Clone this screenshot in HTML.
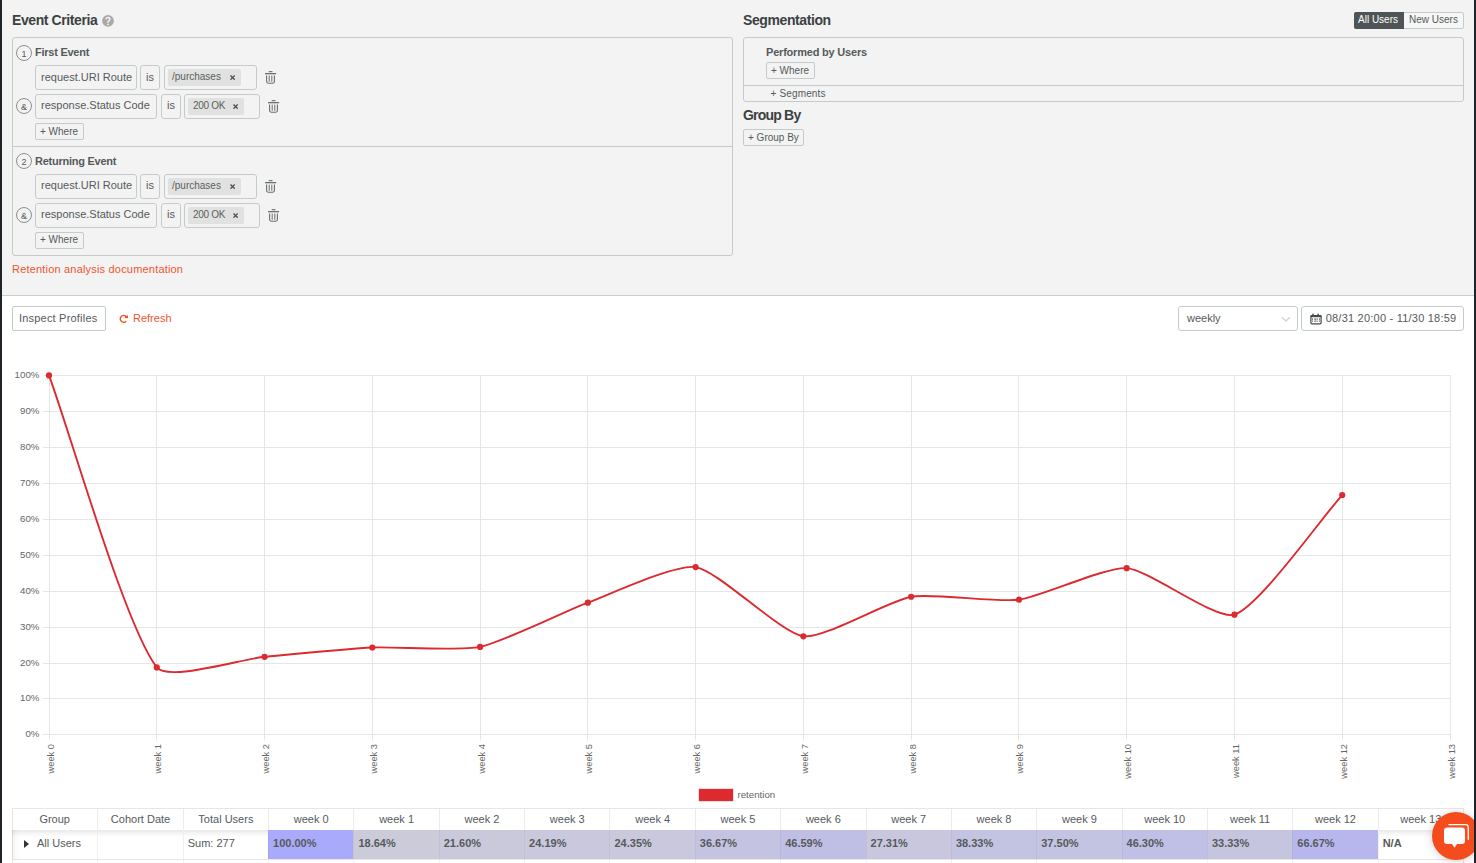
<!DOCTYPE html><html><head><meta charset='utf-8'><style>
*{box-sizing:border-box;margin:0;padding:0}
html,body{width:1476px;height:863px;overflow:hidden;background:#fff;font-family:"Liberation Sans", sans-serif;color:#555a5b}
.a{position:absolute;white-space:nowrap}
.top{position:absolute;left:0;top:0;width:1476px;height:296px;background:#f3f3f3;border-bottom:1px solid #c9cece}
.bl{position:absolute;left:0;top:0;width:2px;height:863px;background:#1d2327;z-index:50}
.br{position:absolute;left:1474px;top:0;width:2px;height:863px;background:#1d2327;z-index:50}
.h{font-size:14px;font-weight:700;color:#3c4142;line-height:14px;letter-spacing:-0.4px}
.box{position:absolute;border:1px solid #c5cbcb;border-radius:3px}
.inp{position:absolute;border:1px solid #c5cbcb;border-radius:3px;height:25px;font-size:11px;line-height:23px;padding-left:5px;color:#555a5b}
.btn{position:absolute;border:1px solid #c5cbcb;border-radius:2px;height:17px;font-size:10px;line-height:15px;padding-left:4px;color:#555a5b;background:#f3f3f3}
.tag{position:absolute;background:#e1e1e1;border-radius:2px;height:17px;font-size:10px;line-height:15px;padding-left:4px;color:#5a5f60}
.circ{position:absolute;width:16px;height:16px;border:1px solid #8a9090;border-radius:50%;font-size:9px;line-height:17px;text-align:center;color:#555a5b}
.sub{font-size:11px;font-weight:700;color:#555a5b;line-height:11px;letter-spacing:-0.25px}
.x{position:absolute;font-size:10px;font-weight:700;color:#444}
</style></head><body>
<div class='top'></div><div class='bl'></div><div class='br'></div>
<div class='a h' style='left:12px;top:13px'>Event Criteria</div>
<svg class='a' style='left:102px;top:15px' width='12' height='12' viewBox='0 0 12 12'><circle cx='6' cy='5.9' r='5.9' fill='#a9a9a9'/><path d='M3.9,4.3 Q4.1,2.4 6,2.4 Q7.9,2.4 7.9,4.1 Q7.9,5.2 6.7,6 Q5.9,6.5 5.9,7.7' fill='none' stroke='#f3f3f3' stroke-width='1.5'/><circle cx='5.85' cy='9.45' r='0.9' fill='#f3f3f3'/></svg>
<div class='box' style='left:12px;top:37px;width:721px;height:219px'></div>
<div class='a' style='left:12px;top:146px;width:721px;height:1px;background:#c5cbcb'></div>
<div class='circ' style='left:16px;top:45px'>1</div>
<div class='a sub' style='left:35px;top:47.3px'>First Event</div>
<div class='inp' style='left:35px;top:65px;width:102px;line-height:23px'>request.URI Route</div>
<div class='inp' style='left:140px;top:65px;width:20px;padding-left:5px;line-height:23px'>is</div>
<div class='inp' style='left:164px;top:65px;width:93px'></div>
<div class='tag' style='left:168px;top:69px;width:73px;letter-spacing:0px'>/purchases</div>
<svg class='a' style='left:230px;top:75.2px' width='5.2' height='5.2' viewBox='0 0 5.2 5.2'><path d='M0.5,0.5 L4.7,4.7 M4.7,0.5 L0.5,4.7' stroke='#4a4e4f' stroke-width='1.3'/></svg>
<svg class='a' style='left:264px;top:65px' width='14' height='20' viewBox='0 0 14 20'>
<rect x='4.7' y='6.1' width='3.8' height='1.1' fill='#6a6e6e'/>
<rect x='1' y='8.0' width='11.1' height='1.3' fill='#6a6e6e'/>
<path d='M2.6,10.6 V16.6 Q2.6,18.2 4.2,18.2 H8.8 Q10.4,18.2 10.4,16.6 V10.6' fill='none' stroke='#6a6e6e' stroke-width='1.1'/>
<path d='M5.2,10.6 V16.8 M7.8,10.6 V16.8' stroke='#6a6e6e' stroke-width='1.0'/>
</svg>
<div class='circ' style='left:16px;top:98px'>&amp;</div>
<div class='inp' style='left:35px;top:94px;width:122px;line-height:21px'>response.Status Code</div>
<div class='inp' style='left:161px;top:94px;width:20px;line-height:21px'>is</div>
<div class='inp' style='left:184px;top:94px;width:76px'></div>
<div class='tag' style='left:188px;top:98px;width:56px;padding-left:5px;letter-spacing:-0.3px'>200 OK</div>
<svg class='a' style='left:232.8px;top:103.6px' width='5.2' height='5.2' viewBox='0 0 5.2 5.2'><path d='M0.5,0.5 L4.7,4.7 M4.7,0.5 L0.5,4.7' stroke='#4a4e4f' stroke-width='1.3'/></svg>
<svg class='a' style='left:267px;top:94px' width='14' height='20' viewBox='0 0 14 20'>
<rect x='4.7' y='6.1' width='3.8' height='1.1' fill='#6a6e6e'/>
<rect x='1' y='8.0' width='11.1' height='1.3' fill='#6a6e6e'/>
<path d='M2.6,10.6 V16.6 Q2.6,18.2 4.2,18.2 H8.8 Q10.4,18.2 10.4,16.6 V10.6' fill='none' stroke='#6a6e6e' stroke-width='1.1'/>
<path d='M5.2,10.6 V16.8 M7.8,10.6 V16.8' stroke='#6a6e6e' stroke-width='1.0'/>
</svg>
<div class='btn' style='left:35px;top:123px;width:49px;line-height:15px'>+ Where</div>
<div class='circ' style='left:16px;top:153px'>2</div>
<div class='a sub' style='left:35px;top:156px'>Returning Event</div>
<div class='inp' style='left:35px;top:174px;width:102px;line-height:21px'>request.URI Route</div>
<div class='inp' style='left:140px;top:174px;width:20px;padding-left:5px;line-height:21px'>is</div>
<div class='inp' style='left:164px;top:174px;width:93px'></div>
<div class='tag' style='left:168px;top:178px;width:73px;letter-spacing:0px'>/purchases</div>
<svg class='a' style='left:230px;top:184.2px' width='5.2' height='5.2' viewBox='0 0 5.2 5.2'><path d='M0.5,0.5 L4.7,4.7 M4.7,0.5 L0.5,4.7' stroke='#4a4e4f' stroke-width='1.3'/></svg>
<svg class='a' style='left:264px;top:174px' width='14' height='20' viewBox='0 0 14 20'>
<rect x='4.7' y='6.1' width='3.8' height='1.1' fill='#6a6e6e'/>
<rect x='1' y='8.0' width='11.1' height='1.3' fill='#6a6e6e'/>
<path d='M2.6,10.6 V16.6 Q2.6,18.2 4.2,18.2 H8.8 Q10.4,18.2 10.4,16.6 V10.6' fill='none' stroke='#6a6e6e' stroke-width='1.1'/>
<path d='M5.2,10.6 V16.8 M7.8,10.6 V16.8' stroke='#6a6e6e' stroke-width='1.0'/>
</svg>
<div class='circ' style='left:16px;top:207px'>&amp;</div>
<div class='inp' style='left:35px;top:203px;width:122px;line-height:21px'>response.Status Code</div>
<div class='inp' style='left:161px;top:203px;width:20px;line-height:21px'>is</div>
<div class='inp' style='left:184px;top:203px;width:76px'></div>
<div class='tag' style='left:188px;top:207px;width:56px;padding-left:5px;letter-spacing:-0.3px'>200 OK</div>
<svg class='a' style='left:232.8px;top:212.6px' width='5.2' height='5.2' viewBox='0 0 5.2 5.2'><path d='M0.5,0.5 L4.7,4.7 M4.7,0.5 L0.5,4.7' stroke='#4a4e4f' stroke-width='1.3'/></svg>
<svg class='a' style='left:267px;top:203px' width='14' height='20' viewBox='0 0 14 20'>
<rect x='4.7' y='6.1' width='3.8' height='1.1' fill='#6a6e6e'/>
<rect x='1' y='8.0' width='11.1' height='1.3' fill='#6a6e6e'/>
<path d='M2.6,10.6 V16.6 Q2.6,18.2 4.2,18.2 H8.8 Q10.4,18.2 10.4,16.6 V10.6' fill='none' stroke='#6a6e6e' stroke-width='1.1'/>
<path d='M5.2,10.6 V16.8 M7.8,10.6 V16.8' stroke='#6a6e6e' stroke-width='1.0'/>
</svg>
<div class='btn' style='left:35px;top:232px;width:49px;line-height:13px'>+ Where</div>
<div class='a' style='left:12px;top:264px;font-size:11px;line-height:11px;letter-spacing:0.19px;color:#f0552f'>Retention analysis documentation</div>
<div class='a h' style='left:743px;top:13px'>Segmentation</div>
<div class='box' style='left:743px;top:37px;width:721px;height:65px'></div>
<div class='a' style='left:743px;top:85px;width:721px;height:1px;background:#c5cbcb'></div>
<div class='a sub' style='left:766px;top:47px;letter-spacing:-0.2px'>Performed by Users</div>
<div class='btn' style='left:766px;top:62px;width:49px'>+ Where</div>
<div class='a' style='left:770.5px;top:88px;font-size:10px;line-height:12px;letter-spacing:0.15px;color:#555a5b'>+ Segments</div>
<div class='a h' style='left:743px;top:108px;letter-spacing:-0.8px'>Group By</div>
<div class='btn' style='left:743px;top:129px;width:61px'>+ Group By</div>
<div class='a' style='left:1354px;top:12px;width:110px;height:17px;border:1px solid #c5cbcb;border-radius:2px;background:#f6f6f6'></div>
<div class='a' style='left:1354px;top:12px;width:50px;height:17px;background:#4f5556;border-radius:2px 0 0 2px;color:#fff;font-size:10px;line-height:16px;padding-left:4px'>All Users</div>
<div class='a' style='left:1409px;top:12px;font-size:10px;line-height:16px;color:#555a5b'>New Users</div>
<div class='a' style='left:12px;top:306px;width:94px;height:25px;border:1px solid #c5cbcb;border-radius:2px;font-size:11px;line-height:23px;padding-left:6px;letter-spacing:0.2px;color:#555a5b'>Inspect Profiles</div>
<svg class='a' style='left:118px;top:314px' width='11' height='10' viewBox='0 0 11 10'><path d='M7.4,1.9 A3.4,3.4 0 1 0 8.2,7.3' fill='none' stroke='#f4511e' stroke-width='1.4'/><rect x='7' y='1.6' width='3' height='2.6' fill='#f4511e'/></svg>
<div class='a' style='left:133px;top:313px;font-size:11px;line-height:11px;color:#f0552f'>Refresh</div>
<div class='a' style='left:1178px;top:306px;width:120px;height:25px;border:1px solid #c5cbcb;border-radius:3px;font-size:11px;line-height:23px;padding-left:8px;color:#555a5b'>weekly</div>
<svg class='a' style='left:1280px;top:315px' width='12' height='8' viewBox='0 0 12 8'><path d='M1.9,2.2 L5.9,6 L9.9,2.2' fill='none' stroke='#d2d4d4' stroke-width='1.4'/></svg>
<div class='a' style='left:1301px;top:306px;width:163px;height:25px;border:1px solid #c5cbcb;border-radius:3px'></div>
<svg class='a' style='left:1310px;top:313px' width='12' height='12' viewBox='0 0 12 12'><rect x='0.9' y='2.6' width='10.2' height='8.2' rx='1' fill='#fff' stroke='#454b4c' stroke-width='1.2'/><rect x='0.6' y='2.2' width='10.8' height='2' fill='#454b4c'/><rect x='2.2' y='0.6' width='1.5' height='2' rx='0.6' fill='#454b4c'/><rect x='7.4' y='0.6' width='1.5' height='2' rx='0.6' fill='#454b4c'/><rect x='2.0' y='5.2' width='0.8' height='2.4' fill='#5f6566'/><rect x='4.4' y='5.2' width='0.8' height='2.4' fill='#5f6566'/><rect x='5.4' y='5.2' width='0.8' height='2.4' fill='#5f6566'/><rect x='6.8' y='5.2' width='0.8' height='2.4' fill='#5f6566'/><rect x='9.2' y='5.2' width='0.8' height='2.4' fill='#5f6566'/><circle cx='2.4' cy='8.4' r='0.5' fill='#5f6566'/><circle cx='4.8' cy='8.4' r='0.5' fill='#5f6566'/><circle cx='5.8' cy='8.4' r='0.5' fill='#5f6566'/><circle cx='7.2' cy='8.4' r='0.5' fill='#5f6566'/><circle cx='9.6' cy='8.4' r='0.5' fill='#5f6566'/></svg>
<div class='a' style='left:1325.7px;top:313px;font-size:11px;line-height:11px;letter-spacing:0.22px;color:#555a5b'>08/31 20:00 - 11/30 18:59</div>
<svg class='a' style='left:0;top:0' width='1476' height='863' viewBox='0 0 1476 863'><line x1='43' y1='375.5' x2='1451' y2='375.5' stroke='#e6e6e6' stroke-width='1'/><line x1='43' y1='411.5' x2='1451' y2='411.5' stroke='#e6e6e6' stroke-width='1'/><line x1='43' y1='447.5' x2='1451' y2='447.5' stroke='#e6e6e6' stroke-width='1'/><line x1='43' y1='483.5' x2='1451' y2='483.5' stroke='#e6e6e6' stroke-width='1'/><line x1='43' y1='519.5' x2='1451' y2='519.5' stroke='#e6e6e6' stroke-width='1'/><line x1='43' y1='555.5' x2='1451' y2='555.5' stroke='#e6e6e6' stroke-width='1'/><line x1='43' y1='591.5' x2='1451' y2='591.5' stroke='#e6e6e6' stroke-width='1'/><line x1='43' y1='627.5' x2='1451' y2='627.5' stroke='#e6e6e6' stroke-width='1'/><line x1='43' y1='663.5' x2='1451' y2='663.5' stroke='#e6e6e6' stroke-width='1'/><line x1='43' y1='698.5' x2='1451' y2='698.5' stroke='#e6e6e6' stroke-width='1'/><line x1='43' y1='734.5' x2='1451' y2='734.5' stroke='#e6e6e6' stroke-width='1'/><line x1='49.50' y1='375' x2='49.50' y2='740.5' stroke='#e6e6e6' stroke-width='1'/><line x1='156.50' y1='375' x2='156.50' y2='740.5' stroke='#e6e6e6' stroke-width='1'/><line x1='264.50' y1='375' x2='264.50' y2='740.5' stroke='#e6e6e6' stroke-width='1'/><line x1='372.50' y1='375' x2='372.50' y2='740.5' stroke='#e6e6e6' stroke-width='1'/><line x1='480.50' y1='375' x2='480.50' y2='740.5' stroke='#e6e6e6' stroke-width='1'/><line x1='587.50' y1='375' x2='587.50' y2='740.5' stroke='#e6e6e6' stroke-width='1'/><line x1='695.50' y1='375' x2='695.50' y2='740.5' stroke='#e6e6e6' stroke-width='1'/><line x1='803.50' y1='375' x2='803.50' y2='740.5' stroke='#e6e6e6' stroke-width='1'/><line x1='911.50' y1='375' x2='911.50' y2='740.5' stroke='#e6e6e6' stroke-width='1'/><line x1='1018.50' y1='375' x2='1018.50' y2='740.5' stroke='#e6e6e6' stroke-width='1'/><line x1='1126.50' y1='375' x2='1126.50' y2='740.5' stroke='#e6e6e6' stroke-width='1'/><line x1='1234.50' y1='375' x2='1234.50' y2='740.5' stroke='#e6e6e6' stroke-width='1'/><line x1='1342.50' y1='375' x2='1342.50' y2='740.5' stroke='#e6e6e6' stroke-width='1'/><line x1='1450.50' y1='375' x2='1450.50' y2='740.5' stroke='#e6e6e6' stroke-width='1'/><path d='M49.00,375.40 C70.55,433.80 124.79,625.65 156.77,667.40 C167.90,681.93 242.97,658.77 264.54,656.78 C286.08,654.79 350.71,648.47 372.31,647.48 C393.82,646.50 459.36,651.21 480.08,646.91 C502.47,642.25 566.01,610.78 587.85,602.69 C609.12,594.81 675.36,563.93 695.62,567.09 C718.47,570.65 780.65,633.16 803.38,636.28 C823.76,639.09 888.92,600.51 911.15,596.73 C932.03,593.19 997.81,602.51 1018.92,599.71 C1040.92,596.79 1105.62,566.67 1126.69,568.13 C1148.72,569.66 1216.29,620.84 1234.46,614.68 C1259.39,606.22 1320.68,518.95 1342.23,495.02' fill='none' stroke='#dc2a2f' stroke-width='1.9'/><circle cx='49.00' cy='375.40' r='3.1' fill='#dc2a2f'/><circle cx='156.77' cy='667.40' r='3.1' fill='#dc2a2f'/><circle cx='264.54' cy='656.78' r='3.1' fill='#dc2a2f'/><circle cx='372.31' cy='647.48' r='3.1' fill='#dc2a2f'/><circle cx='480.08' cy='646.91' r='3.1' fill='#dc2a2f'/><circle cx='587.85' cy='602.69' r='3.1' fill='#dc2a2f'/><circle cx='695.62' cy='567.09' r='3.1' fill='#dc2a2f'/><circle cx='803.38' cy='636.28' r='3.1' fill='#dc2a2f'/><circle cx='911.15' cy='596.73' r='3.1' fill='#dc2a2f'/><circle cx='1018.92' cy='599.71' r='3.1' fill='#dc2a2f'/><circle cx='1126.69' cy='568.13' r='3.1' fill='#dc2a2f'/><circle cx='1234.46' cy='614.68' r='3.1' fill='#dc2a2f'/><circle cx='1342.23' cy='495.02' r='3.1' fill='#dc2a2f'/></svg>
<div class='a' style='left:0;width:39.4px;text-align:right;top:369.4px;font-size:9.7px;line-height:12px;color:#666'>100%</div>
<div class='a' style='left:0;width:39.4px;text-align:right;top:405.3px;font-size:9.7px;line-height:12px;color:#666'>90%</div>
<div class='a' style='left:0;width:39.4px;text-align:right;top:441.2px;font-size:9.7px;line-height:12px;color:#666'>80%</div>
<div class='a' style='left:0;width:39.4px;text-align:right;top:477.1px;font-size:9.7px;line-height:12px;color:#666'>70%</div>
<div class='a' style='left:0;width:39.4px;text-align:right;top:513.0px;font-size:9.7px;line-height:12px;color:#666'>60%</div>
<div class='a' style='left:0;width:39.4px;text-align:right;top:548.8px;font-size:9.7px;line-height:12px;color:#666'>50%</div>
<div class='a' style='left:0;width:39.4px;text-align:right;top:584.7px;font-size:9.7px;line-height:12px;color:#666'>40%</div>
<div class='a' style='left:0;width:39.4px;text-align:right;top:620.6px;font-size:9.7px;line-height:12px;color:#666'>30%</div>
<div class='a' style='left:0;width:39.4px;text-align:right;top:656.5px;font-size:9.7px;line-height:12px;color:#666'>20%</div>
<div class='a' style='left:0;width:39.4px;text-align:right;top:692.4px;font-size:9.7px;line-height:12px;color:#666'>10%</div>
<div class='a' style='left:0;width:39.4px;text-align:right;top:728.3px;font-size:9.7px;line-height:12px;color:#666'>0%</div>
<div class='a' style='left:44.50px;top:744px;width:12px;height:40px'><div style='position:absolute;right:0;top:0;transform-origin:100% 0;transform:rotate(-90deg) translate(0,-12px);font-size:9.3px;line-height:12px;color:#666;text-align:right;white-space:nowrap;width:60px'>week 0</div></div>
<div class='a' style='left:152.27px;top:744px;width:12px;height:40px'><div style='position:absolute;right:0;top:0;transform-origin:100% 0;transform:rotate(-90deg) translate(0,-12px);font-size:9.3px;line-height:12px;color:#666;text-align:right;white-space:nowrap;width:60px'>week 1</div></div>
<div class='a' style='left:260.04px;top:744px;width:12px;height:40px'><div style='position:absolute;right:0;top:0;transform-origin:100% 0;transform:rotate(-90deg) translate(0,-12px);font-size:9.3px;line-height:12px;color:#666;text-align:right;white-space:nowrap;width:60px'>week 2</div></div>
<div class='a' style='left:367.81px;top:744px;width:12px;height:40px'><div style='position:absolute;right:0;top:0;transform-origin:100% 0;transform:rotate(-90deg) translate(0,-12px);font-size:9.3px;line-height:12px;color:#666;text-align:right;white-space:nowrap;width:60px'>week 3</div></div>
<div class='a' style='left:475.58px;top:744px;width:12px;height:40px'><div style='position:absolute;right:0;top:0;transform-origin:100% 0;transform:rotate(-90deg) translate(0,-12px);font-size:9.3px;line-height:12px;color:#666;text-align:right;white-space:nowrap;width:60px'>week 4</div></div>
<div class='a' style='left:583.35px;top:744px;width:12px;height:40px'><div style='position:absolute;right:0;top:0;transform-origin:100% 0;transform:rotate(-90deg) translate(0,-12px);font-size:9.3px;line-height:12px;color:#666;text-align:right;white-space:nowrap;width:60px'>week 5</div></div>
<div class='a' style='left:691.12px;top:744px;width:12px;height:40px'><div style='position:absolute;right:0;top:0;transform-origin:100% 0;transform:rotate(-90deg) translate(0,-12px);font-size:9.3px;line-height:12px;color:#666;text-align:right;white-space:nowrap;width:60px'>week 6</div></div>
<div class='a' style='left:798.88px;top:744px;width:12px;height:40px'><div style='position:absolute;right:0;top:0;transform-origin:100% 0;transform:rotate(-90deg) translate(0,-12px);font-size:9.3px;line-height:12px;color:#666;text-align:right;white-space:nowrap;width:60px'>week 7</div></div>
<div class='a' style='left:906.65px;top:744px;width:12px;height:40px'><div style='position:absolute;right:0;top:0;transform-origin:100% 0;transform:rotate(-90deg) translate(0,-12px);font-size:9.3px;line-height:12px;color:#666;text-align:right;white-space:nowrap;width:60px'>week 8</div></div>
<div class='a' style='left:1014.42px;top:744px;width:12px;height:40px'><div style='position:absolute;right:0;top:0;transform-origin:100% 0;transform:rotate(-90deg) translate(0,-12px);font-size:9.3px;line-height:12px;color:#666;text-align:right;white-space:nowrap;width:60px'>week 9</div></div>
<div class='a' style='left:1122.19px;top:744px;width:12px;height:40px'><div style='position:absolute;right:0;top:0;transform-origin:100% 0;transform:rotate(-90deg) translate(0,-12px);font-size:9.3px;line-height:12px;color:#666;text-align:right;white-space:nowrap;width:60px'>week 10</div></div>
<div class='a' style='left:1229.96px;top:744px;width:12px;height:40px'><div style='position:absolute;right:0;top:0;transform-origin:100% 0;transform:rotate(-90deg) translate(0,-12px);font-size:9.3px;line-height:12px;color:#666;text-align:right;white-space:nowrap;width:60px'>week 11</div></div>
<div class='a' style='left:1337.73px;top:744px;width:12px;height:40px'><div style='position:absolute;right:0;top:0;transform-origin:100% 0;transform:rotate(-90deg) translate(0,-12px);font-size:9.3px;line-height:12px;color:#666;text-align:right;white-space:nowrap;width:60px'>week 12</div></div>
<div class='a' style='left:1445.50px;top:744px;width:12px;height:40px'><div style='position:absolute;right:0;top:0;transform-origin:100% 0;transform:rotate(-90deg) translate(0,-12px);font-size:9.3px;line-height:12px;color:#666;text-align:right;white-space:nowrap;width:60px'>week 13</div></div>
<div class='a' style='left:699.3px;top:789.3px;width:34px;height:11.5px;background:#dc2a2f;box-shadow:0 0 0 0.5px rgba(220,42,47,0.35)'></div>
<div class='a' style='left:737.5px;top:789px;font-size:9.7px;line-height:12px;color:#666'>retention</div>
<div class='a' style='left:12px;top:808px;width:1452px;height:60px;border:1px solid #e6e6e6;border-bottom:none'></div>
<div class='a' style='left:12px;top:830px;width:1452px;height:29px;box-shadow:inset 0 7px 6px -5px rgba(0,0,0,0.12), inset 8px 0 7px -6px rgba(0,0,0,0.07)'></div>
<div class='a' style='left:12.00px;top:809px;width:85.35px;height:21px;font-size:11px;line-height:21px;text-align:center;color:#555a5b;border-left:none'>Group</div>
<div class='a' style='left:12.00px;top:830px;width:85.35px;height:29px;border-left:none'></div>
<div class='a' style='left:97.35px;top:809px;width:85.35px;height:21px;font-size:11px;line-height:21px;text-align:center;color:#555a5b;border-left:1px solid #ececec'>Cohort Date</div>
<div class='a' style='left:97.35px;top:830px;width:85.35px;height:29px;border-left:1px solid #f0f0f0'></div>
<div class='a' style='left:182.71px;top:809px;width:85.35px;height:21px;font-size:11px;line-height:21px;text-align:center;color:#555a5b;border-left:1px solid #ececec'>Total Users</div>
<div class='a' style='left:182.71px;top:830px;width:85.35px;height:29px;font-size:11px;font-weight:400;line-height:27px;padding-left:4px;color:#555a5b;border-left:1px solid #f0f0f0'>Sum: 277</div>
<div class='a' style='left:268.06px;top:809px;width:85.35px;height:21px;font-size:11px;line-height:21px;text-align:center;color:#555a5b;border-left:1px solid #ececec'>week 0</div>
<div class='a' style='left:268.06px;top:830px;width:85.35px;height:29px;background:rgb(169,170,251);font-size:11px;font-weight:700;line-height:27px;padding-left:5px;color:#555a5b;box-shadow:inset 1px 0 0 rgba(0,0,0,0.035)'>100.00%</div>
<div class='a' style='left:353.41px;top:809px;width:85.35px;height:21px;font-size:11px;line-height:21px;text-align:center;color:#555a5b;border-left:1px solid #ececec'>week 1</div>
<div class='a' style='left:353.41px;top:830px;width:85.35px;height:29px;background:rgb(203,203,218);font-size:11px;font-weight:700;line-height:27px;padding-left:5px;color:#555a5b;box-shadow:inset 1px 0 0 rgba(0,0,0,0.035)'>18.64%</div>
<div class='a' style='left:438.76px;top:809px;width:85.35px;height:21px;font-size:11px;line-height:21px;text-align:center;color:#555a5b;border-left:1px solid #ececec'>week 2</div>
<div class='a' style='left:438.76px;top:830px;width:85.35px;height:29px;background:rgb(202,201,220);font-size:11px;font-weight:700;line-height:27px;padding-left:5px;color:#555a5b;box-shadow:inset 1px 0 0 rgba(0,0,0,0.035)'>21.60%</div>
<div class='a' style='left:524.12px;top:809px;width:85.35px;height:21px;font-size:11px;line-height:21px;text-align:center;color:#555a5b;border-left:1px solid #ececec'>week 3</div>
<div class='a' style='left:524.12px;top:830px;width:85.35px;height:29px;background:rgb(201,200,221);font-size:11px;font-weight:700;line-height:27px;padding-left:5px;color:#555a5b;box-shadow:inset 1px 0 0 rgba(0,0,0,0.035)'>24.19%</div>
<div class='a' style='left:609.47px;top:809px;width:85.35px;height:21px;font-size:11px;line-height:21px;text-align:center;color:#555a5b;border-left:1px solid #ececec'>week 4</div>
<div class='a' style='left:609.47px;top:830px;width:85.35px;height:29px;background:rgb(201,200,221);font-size:11px;font-weight:700;line-height:27px;padding-left:5px;color:#555a5b;box-shadow:inset 1px 0 0 rgba(0,0,0,0.035)'>24.35%</div>
<div class='a' style='left:694.82px;top:809px;width:85.35px;height:21px;font-size:11px;line-height:21px;text-align:center;color:#555a5b;border-left:1px solid #ececec'>week 5</div>
<div class='a' style='left:694.82px;top:830px;width:85.35px;height:29px;background:rgb(196,195,226);font-size:11px;font-weight:700;line-height:27px;padding-left:5px;color:#555a5b;box-shadow:inset 1px 0 0 rgba(0,0,0,0.035)'>36.67%</div>
<div class='a' style='left:780.18px;top:809px;width:85.35px;height:21px;font-size:11px;line-height:21px;text-align:center;color:#555a5b;border-left:1px solid #ececec'>week 6</div>
<div class='a' style='left:780.18px;top:830px;width:85.35px;height:29px;background:rgb(191,191,230);font-size:11px;font-weight:700;line-height:27px;padding-left:5px;color:#555a5b;box-shadow:inset 1px 0 0 rgba(0,0,0,0.035)'>46.59%</div>
<div class='a' style='left:865.53px;top:809px;width:85.35px;height:21px;font-size:11px;line-height:21px;text-align:center;color:#555a5b;border-left:1px solid #ececec'>week 7</div>
<div class='a' style='left:865.53px;top:830px;width:85.35px;height:29px;background:rgb(200,199,222);font-size:11px;font-weight:700;line-height:27px;padding-left:5px;color:#555a5b;box-shadow:inset 1px 0 0 rgba(0,0,0,0.035)'>27.31%</div>
<div class='a' style='left:950.88px;top:809px;width:85.35px;height:21px;font-size:11px;line-height:21px;text-align:center;color:#555a5b;border-left:1px solid #ececec'>week 8</div>
<div class='a' style='left:950.88px;top:830px;width:85.35px;height:29px;background:rgb(195,195,226);font-size:11px;font-weight:700;line-height:27px;padding-left:5px;color:#555a5b;box-shadow:inset 1px 0 0 rgba(0,0,0,0.035)'>38.33%</div>
<div class='a' style='left:1036.24px;top:809px;width:85.35px;height:21px;font-size:11px;line-height:21px;text-align:center;color:#555a5b;border-left:1px solid #ececec'>week 9</div>
<div class='a' style='left:1036.24px;top:830px;width:85.35px;height:29px;background:rgb(195,195,226);font-size:11px;font-weight:700;line-height:27px;padding-left:5px;color:#555a5b;box-shadow:inset 1px 0 0 rgba(0,0,0,0.035)'>37.50%</div>
<div class='a' style='left:1121.59px;top:809px;width:85.35px;height:21px;font-size:11px;line-height:21px;text-align:center;color:#555a5b;border-left:1px solid #ececec'>week 10</div>
<div class='a' style='left:1121.59px;top:830px;width:85.35px;height:29px;background:rgb(192,191,230);font-size:11px;font-weight:700;line-height:27px;padding-left:5px;color:#555a5b;box-shadow:inset 1px 0 0 rgba(0,0,0,0.035)'>46.30%</div>
<div class='a' style='left:1206.94px;top:809px;width:85.35px;height:21px;font-size:11px;line-height:21px;text-align:center;color:#555a5b;border-left:1px solid #ececec'>week 11</div>
<div class='a' style='left:1206.94px;top:830px;width:85.35px;height:29px;background:rgb(197,197,224);font-size:11px;font-weight:700;line-height:27px;padding-left:5px;color:#555a5b;box-shadow:inset 1px 0 0 rgba(0,0,0,0.035)'>33.33%</div>
<div class='a' style='left:1292.29px;top:809px;width:85.35px;height:21px;font-size:11px;line-height:21px;text-align:center;color:#555a5b;border-left:1px solid #ececec'>week 12</div>
<div class='a' style='left:1292.29px;top:830px;width:85.35px;height:29px;background:rgb(183,183,238);font-size:11px;font-weight:700;line-height:27px;padding-left:5px;color:#555a5b;box-shadow:inset 1px 0 0 rgba(0,0,0,0.035)'>66.67%</div>
<div class='a' style='left:1377.65px;top:809px;width:85.35px;height:21px;font-size:11px;line-height:21px;text-align:center;color:#555a5b;border-left:1px solid #ececec'>week 13</div>
<div class='a' style='left:1377.65px;top:830px;width:85.35px;height:29px;font-size:11px;font-weight:700;line-height:27px;padding-left:4px;color:#555a5b;border-left:1px solid #f0f0f0'>N/A</div>
<div class='a' style='left:12px;top:859px;width:1452px;height:1px;background:#e6e6e6'></div>
<div class='a' style='left:97.35px;top:860px;width:1px;height:4px;background:#f0f0f0'></div>
<div class='a' style='left:182.71px;top:860px;width:1px;height:4px;background:#f0f0f0'></div>
<div class='a' style='left:268.06px;top:860px;width:1px;height:4px;background:#f0f0f0'></div>
<div class='a' style='left:353.41px;top:860px;width:1px;height:4px;background:#f0f0f0'></div>
<div class='a' style='left:438.76px;top:860px;width:1px;height:4px;background:#f0f0f0'></div>
<div class='a' style='left:524.12px;top:860px;width:1px;height:4px;background:#f0f0f0'></div>
<div class='a' style='left:609.47px;top:860px;width:1px;height:4px;background:#f0f0f0'></div>
<div class='a' style='left:694.82px;top:860px;width:1px;height:4px;background:#f0f0f0'></div>
<div class='a' style='left:780.18px;top:860px;width:1px;height:4px;background:#f0f0f0'></div>
<div class='a' style='left:865.53px;top:860px;width:1px;height:4px;background:#f0f0f0'></div>
<div class='a' style='left:950.88px;top:860px;width:1px;height:4px;background:#f0f0f0'></div>
<div class='a' style='left:1036.24px;top:860px;width:1px;height:4px;background:#f0f0f0'></div>
<div class='a' style='left:1121.59px;top:860px;width:1px;height:4px;background:#f0f0f0'></div>
<div class='a' style='left:1206.94px;top:860px;width:1px;height:4px;background:#f0f0f0'></div>
<div class='a' style='left:1292.29px;top:860px;width:1px;height:4px;background:#f0f0f0'></div>
<div class='a' style='left:1377.65px;top:860px;width:1px;height:4px;background:#f0f0f0'></div>
<div class='a' style='left:24px;top:840px;width:0;height:0;border-top:4px solid transparent;border-bottom:4px solid transparent;border-left:5px solid #333'></div>
<div class='a' style='left:37px;top:829px;font-size:11px;line-height:29px;color:#555a5b'>All Users</div>
<div class='a' style='left:1432px;top:812px;width:48px;height:48px;border-radius:50%;background:#f44c1c;box-shadow:0 1px 8px rgba(0,0,0,0.18);z-index:40'></div>
<svg class='a' style='left:1432px;top:812px;z-index:41' width='48' height='48' viewBox='1432 812 48 48'>
<path d='M1448.5,824.6 H1465.5 Q1468.3,824.6 1468.3,827.4 V839.8' fill='none' stroke='#fff' stroke-width='1.3'/>
<path d='M1447,827.5 H1462 Q1465,827.5 1465,830.5 V841 Q1465,844 1462,844 H1457 L1454.5,847.8 L1452,844 H1447 Q1444,844 1444,841 V830.5 Q1444,827.5 1447,827.5 Z' fill='#fff'/>
</svg>
</body></html>
